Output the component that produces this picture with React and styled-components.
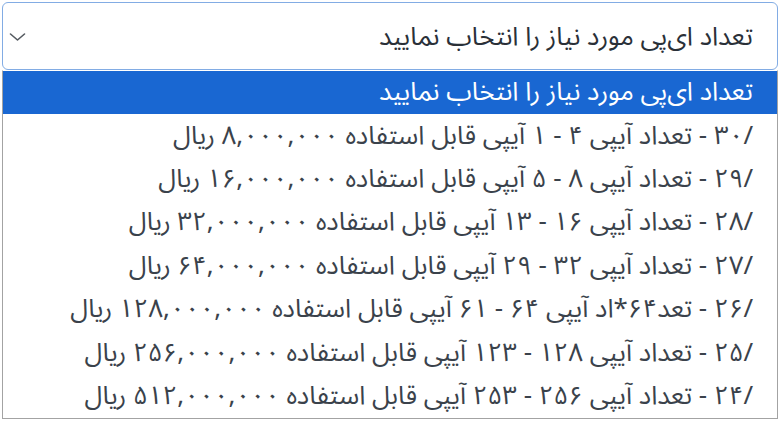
import React from "react";
import styled, { createGlobalStyle } from "styled-components";

const GlobalStyle = createGlobalStyle`
  html, body { margin: 0; padding: 0; background: #ffffff; }
  body { font-family: "Noto Sans", "Noto Sans Arabic", "DejaVu Sans", sans-serif; }
`;

const Page = styled.div`
  padding: 2px 3px 0 2px;
  width: 776px;
`;

const SelectBox = styled.div`
  direction: rtl;
  height: 66px;
  border: 1px solid #82ace4;
  border-radius: 6px;
  display: flex;
  align-items: center;
  justify-content: space-between;
  padding: 0 24px 0 6px;
  color: #2a3038;
  font-size: 25.8px;
  line-height: 1;
  white-space: nowrap;
`;

const Chevron = styled.svg`
  width: 17px;
  height: 8px;
  flex: none;
  margin-top: 2px;
`;

const List = styled.div`
  direction: rtl;
  height: 347px;
  border: 1px solid #a3a3a3;
  border-top-color: transparent;
  display: grid;
  grid-template-rows: repeat(8, minmax(0, 1fr));
  overflow: hidden;
`;

const Option = styled.div`
  display: flex;
  align-items: center;
  min-height: 0;
  padding: 0 24px 3px 0;
  font-size: 25.8px;
  line-height: 1;
  white-space: nowrap;
  background: ${(p) => (p.$active ? "#1967d2" : "transparent")};
  color: ${(p) => (p.$active ? "#ffffff" : "#3a424b")};
`;

const placeholder = "تعداد ای‌پی مورد نیاز را انتخاب نمایید";

const options = [
  "/۳۰ - تعداد آیپی ۴ - ۱ آیپی قابل استفاده ۸,۰۰۰,۰۰۰ ریال",
  "/۲۹ - تعداد آیپی ۸ - ۵ آیپی قابل استفاده ۱۶,۰۰۰,۰۰۰ ریال",
  "/۲۸ - تعداد آیپی ۱۶ - ۱۳ آیپی قابل استفاده ۳۲,۰۰۰,۰۰۰ ریال",
  "/۲۷ - تعداد آیپی ۳۲ - ۲۹ آیپی قابل استفاده ۶۴,۰۰۰,۰۰۰ ریال",
  "/۲۶ - تعد۶۴*اد آیپی ۶۴ - ۶۱ آیپی قابل استفاده ۱۲۸,۰۰۰,۰۰۰ ریال",
  "/۲۵ - تعداد آیپی ۱۲۸ - ۱۲۳ آیپی قابل استفاده ۲۵۶,۰۰۰,۰۰۰ ریال",
  "/۲۴ - تعداد آیپی ۲۵۶ - ۲۵۳ آیپی قابل استفاده ۵۱۲,۰۰۰,۰۰۰ ریال",
];

export default function App() {
  return (
    <>
      <GlobalStyle />
      <Page>
        <SelectBox>
          <span>{placeholder}</span>
          <Chevron viewBox="0 0 17 8" fill="none">
            <path d="M1.5 1 L8.5 7 L15.5 1" stroke="#555a60" strokeWidth="1.6" strokeLinecap="round" strokeLinejoin="round" />
          </Chevron>
        </SelectBox>
        <List>
          <Option $active>{placeholder}</Option>
          {options.map((o) => (
            <Option key={o}>{o}</Option>
          ))}
        </List>
      </Page>
    </>
  );
}
